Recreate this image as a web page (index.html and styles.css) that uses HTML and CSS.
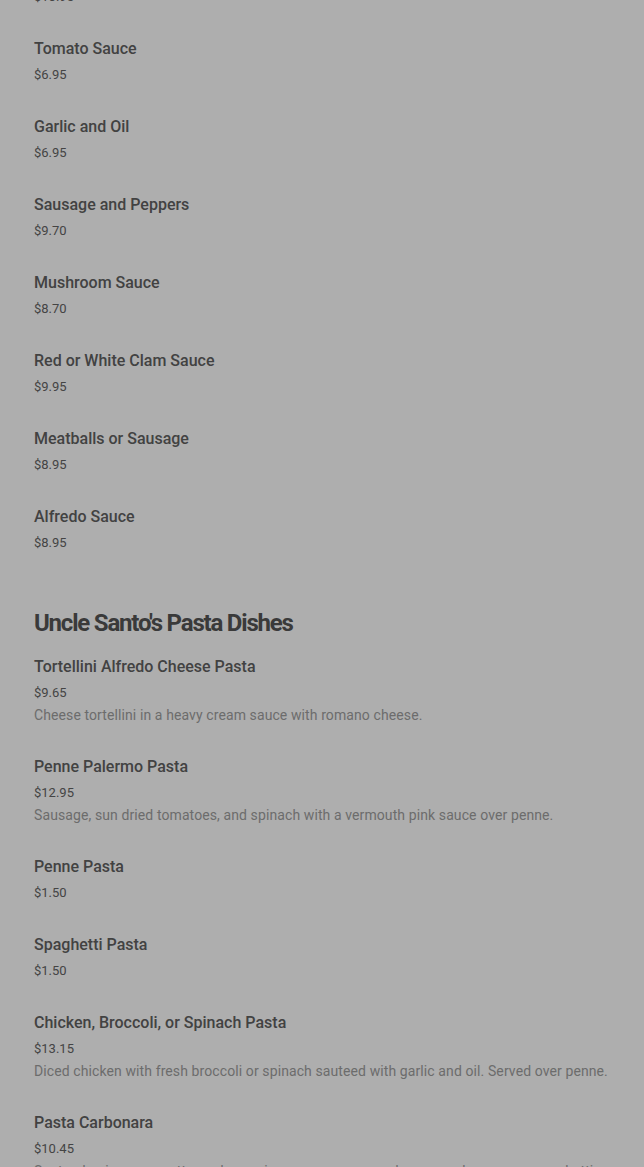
FILE: index.html
```html
<!DOCTYPE html>
<html>
<head>
<meta charset="utf-8">
<link rel="stylesheet" href="styles.css">
</head>
<body>
<main class="menu">
  <section class="section first">
    <div class="item clipped">
      <div class="price">$10.95</div>
    </div>
    <div class="item"><div class="name">Tomato Sauce</div><div class="price">$6.95</div></div>
    <div class="item"><div class="name">Garlic and Oil</div><div class="price">$6.95</div></div>
    <div class="item"><div class="name">Sausage and Peppers</div><div class="price">$9.70</div></div>
    <div class="item"><div class="name">Mushroom Sauce</div><div class="price">$8.70</div></div>
    <div class="item"><div class="name">Red or White Clam Sauce</div><div class="price">$9.95</div></div>
    <div class="item"><div class="name">Meatballs or Sausage</div><div class="price">$8.95</div></div>
    <div class="item"><div class="name">Alfredo Sauce</div><div class="price">$8.95</div></div>
  </section>
  <section class="section">
    <h2 class="heading">Uncle Santo's Pasta Dishes</h2>
    <div class="item"><div class="name">Tortellini Alfredo Cheese Pasta</div><div class="price">$9.65</div><div class="desc">Cheese tortellini in a heavy cream sauce with romano cheese.</div></div>
    <div class="item"><div class="name">Penne Palermo Pasta</div><div class="price">$12.95</div><div class="desc">Sausage, sun dried tomatoes, and spinach with a vermouth pink sauce over penne.</div></div>
    <div class="item"><div class="name">Penne Pasta</div><div class="price">$1.50</div></div>
    <div class="item"><div class="name">Spaghetti Pasta</div><div class="price">$1.50</div></div>
    <div class="item"><div class="name">Chicken, Broccoli, or Spinach Pasta</div><div class="price">$13.15</div><div class="desc">Diced chicken with fresh broccoli or spinach sauteed with garlic and oil. Served over penne.</div></div>
    <div class="item"><div class="name">Pasta Carbonara</div><div class="price">$10.45</div><div class="desc">Sauteed onions, pancetta, and peas, in a cream sauce and romano cheese over spaghetti.</div></div>
  </section>
</main>
</body>
</html>
```
FILE: styles.css
```css
html, body {
  margin: 0;
  padding: 0;
  background: #aeaeae;
  overflow: hidden;
}
body {
  font-family: Roboto, "Liberation Sans", sans-serif;
  color: #383838;
}
.menu {
  padding: 0 34px;
  margin-top: -13px;
  display: flex;
  flex-direction: column;
  gap: 54px;
}
.section {
  display: flex;
  flex-direction: column;
  gap: 30px;
}
.section .heading + .item {
  margin-top: -14px;
}
.heading {
  margin: 0;
  font-size: 24px;
  line-height: 32px;
  font-weight: 700;
  letter-spacing: -1.2px;
  color: #3a3a3a;
}
.item {
  display: flex;
  flex-direction: column;
}
.name {
  font-size: 16px;
  line-height: 24px;
  font-weight: 500;
  color: #424242;
  margin-bottom: 4px;
}
.price {
  font-size: 13px;
  line-height: 20px;
  color: #444;
}
.desc {
  margin-top: 2px;
  font-size: 14px;
  line-height: 20px;
  letter-spacing: 0.1px;
  color: #6c6c6c;
}
```
